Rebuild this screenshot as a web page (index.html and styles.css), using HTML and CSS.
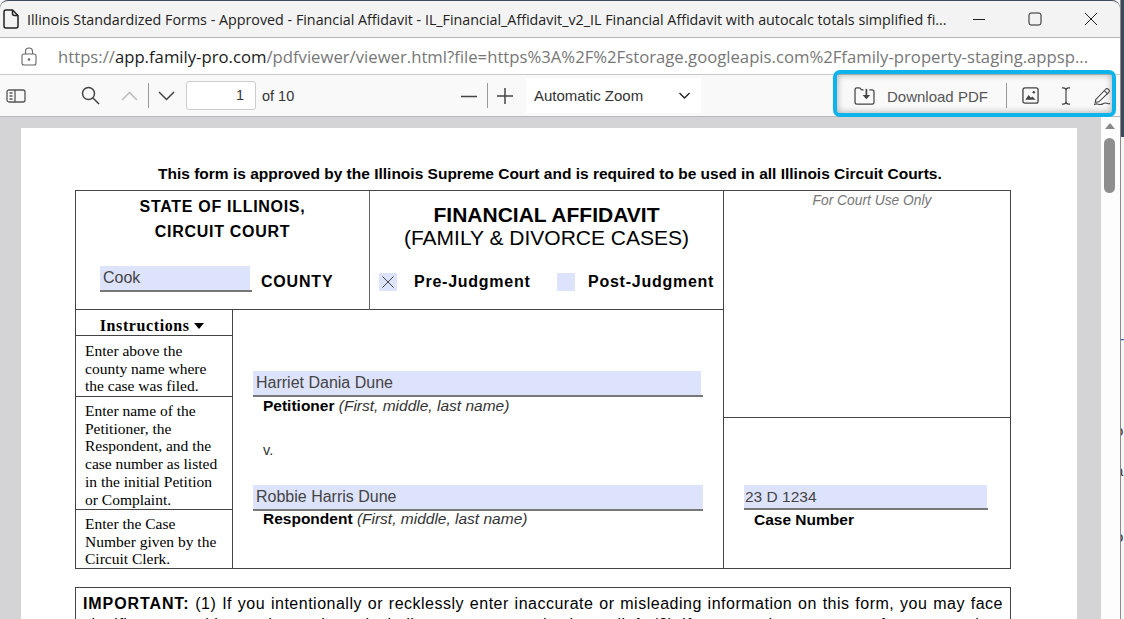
FILE: index.html
```html
<!DOCTYPE html>
<html lang="en">
<head>
    <meta charset="UTF-8">
    <title>Illinois Standardized Forms - Financial Affidavit</title>
    <link rel="stylesheet" href="styles.css">
</head>
<body>

<div class="desktop">
    <div class="window">

        <!-- title bar -->
        <div class="titlebar">
            <svg class="doc-icon" width="16" height="20" viewBox="0 0 16 20" fill="none" stroke="#222" stroke-width="1.5"><path d="M3 1h6.5L15 6.5V17a2 2 0 0 1-2 2H3a2 2 0 0 1-2-2V3a2 2 0 0 1 2-2z"/><path d="M9.5 1v3.5a2 2 0 0 0 2 2H15"/></svg>
            <span class="title-text">Illinois Standardized Forms - Approved - Financial Affidavit - IL_Financial_Affidavit_v2_IL Financial Affidavit with autocalc totals simplified fi...</span>
            <div class="win-buttons">
                <svg width="14" height="14" viewBox="0 0 14 14" stroke="#222" fill="none"><path d="M1 7.5h12"/></svg>
                <svg width="14" height="14" viewBox="0 0 14 14" stroke="#222" fill="none"><rect x="1" y="1" width="12" height="12" rx="2"/></svg>
                <svg width="14" height="14" viewBox="0 0 14 14" stroke="#222" fill="none"><path d="M1 1l12 12M13 1L1 13"/></svg>
            </div>
        </div>

        <!-- address bar -->
        <div class="addressbar">
            <svg class="lock-icon" width="16" height="19" viewBox="0 0 16 19" fill="none" stroke="#666" stroke-width="1.1"><rect x="1" y="7" width="14" height="11" rx="2"/><path d="M4.5 7V4.5a3.5 3.5 0 0 1 7 0V7"/><circle cx="8" cy="12.5" r="0.8" fill="#666"/></svg>
            <span class="url">https://<span class="url-host">app.family-pro.com</span>/pdfviewer/viewer.html?file=https%3A%2F%2Fstorage.googleapis.com%2Ffamily-property-staging.appsp...</span>
        </div>

        <!-- pdf toolbar -->
        <div class="toolbar">
            <svg class="tb-sidebar" width="20" height="14" viewBox="0 0 20 14" fill="none" stroke="#555" stroke-width="1.3"><rect x="1" y="1" width="18" height="12" rx="2"/><path d="M9 1v12M3.5 4h3M3.5 7h3M3.5 10h3"/></svg>
            <svg class="tb-search" width="19" height="19" viewBox="0 0 19 19" fill="none" stroke="#444" stroke-width="1.5"><circle cx="7.5" cy="7.5" r="6"/><path d="M12 12l6 6"/></svg>
            <svg class="tb-up" width="17" height="10" viewBox="0 0 17 10" fill="none" stroke="#bbb" stroke-width="1.5"><path d="M1 9l7.5-7.5L16 9"/></svg>
            <span class="tb-sep tb-sep-page"></span>
            <svg class="tb-down" width="17" height="10" viewBox="0 0 17 10" fill="none" stroke="#444" stroke-width="1.5"><path d="M1 1l7.5 7.5L16 1"/></svg>
            <div class="page-input">1</div>
            <span class="page-count">of 10</span>

            <svg class="tb-minus" width="16" height="16" viewBox="0 0 16 16" stroke="#444" stroke-width="1.5"><path d="M0 8.5h16"/></svg>
            <span class="tb-sep tb-sep-zoom"></span>
            <svg class="tb-plus" width="16" height="16" viewBox="0 0 16 16" stroke="#444" stroke-width="1.5"><path d="M0 8h16M8 0v16"/></svg>
            <div class="zoom-select">
                <span>Automatic Zoom</span>
                <svg width="11" height="7" viewBox="0 0 11 7" fill="none" stroke="#222" stroke-width="1.4"><path d="M0.5 1l5 5 5-5"/></svg>
            </div>

            <svg class="tb-download" width="21" height="18" viewBox="0 0 22 19" fill="none" stroke="#444" stroke-width="1.3"><path d="M6 1H3a2 2 0 0 0-2 2v13a2 2 0 0 0 2 2h16a2 2 0 0 0 2-2V5a2 2 0 0 0-2-2h-3"/><path d="M6 1l2 2h2"/><path d="M13 2v9" stroke-width="1.8"/><path d="M9 8.500h8l-4 4.500z" fill="#444" stroke="none"/></svg>
            <span class="download-label">Download PDF</span>
            <span class="tb-sep tb-sep-tools"></span>
            <svg class="tb-image" width="17" height="17" viewBox="0 0 18 18" fill="none" stroke="#444" stroke-width="1.4"><rect x="1" y="1" width="16" height="16" rx="2"/><path d="M3.5 13.5l3.5-5 2.5 3 1.5-1.500 3.500 3.500z" fill="#444" stroke="none"/><circle cx="12.500" cy="5.500" r="1.300" fill="#444" stroke="none"/></svg>
            <svg class="tb-cursor" width="10" height="20" viewBox="0 0 11 20" fill="none" stroke="#444" stroke-width="1.300"><path d="M1 1h1.500a3 3 0 0 1 3 3v12a3 3 0 0 1-3 3H1M10 1H8.500a3 3 0 0 0-3 3M10 19H8.500a3 3 0 0 1-3-3"/></svg>
            <svg class="tb-pen" width="18" height="20" viewBox="0 0 20 20" fill="none" stroke="#444" stroke-width="1.200"><path d="M3 14L14 2.500a2 2 0 0 1 3 0l.5.500a2 2 0 0 1 0 3L6.500 16.500 2.500 17z"/><path d="M12.500 4l4 4"/><path d="M1 19.300c4-1.500 5 .5 8 0s3-2 5-1.500 3 1.200 5 .5"/></svg>
        </div>

        <div class="viewer">
            <div class="viewer-main">
                <div class="page">
                    <p class="approved">This form is approved by the Illinois Supreme Court and is required to be used in all Illinois Circuit Courts.</p>

                    <div class="form-table">
                        <div class="cell-state">
                            <div class="state-title">STATE OF ILLINOIS,<br>CIRCUIT COURT</div>
                            <div class="county-row">
                                <div class="field-line county-line"><div class="field">Cook</div></div>
                                <span class="county-label">COUNTY</span>
                            </div>
                        </div>

                        <div class="cell-title">
                            <div class="form-name">FINANCIAL AFFIDAVIT</div>
                            <div class="form-sub">(FAMILY &amp; DIVORCE CASES)</div>
                            <div class="judgment-row">
                                <span class="check">
                                    <svg width="12" height="12" viewBox="0 0 12 12" stroke="#444" stroke-width="1"><path d="M0.500 0.500l11 11M11.500 0.500l-11 11"/></svg>
                                </span>
                                <span class="judgment pre">Pre-Judgment</span>
                                <span class="check"></span>
                                <span class="judgment post">Post-Judgment</span>
                            </div>
                        </div>

                        <div class="cell-court">
                            <div class="court-use">
                                <span class="court-note">For Court Use Only</span>
                            </div>
                            <div class="case-box">
                                <div class="field-line case-line"><div class="field field-case">23 D 1234</div></div>
                                <div class="case-label">Case Number</div>
                            </div>
                        </div>

                        <div class="cell-lower">
                            <div class="instructions">
                                <div class="ins-head">Instructions <span class="ins-arrow"></span></div>
                                <div class="ins-box ins-county">Enter above the county name where the case was filed.</div>
                                <div class="ins-box ins-names">Enter name of the Petitioner, the Respondent, and the case number as listed in the initial Petition or Complaint.</div>
                                <div class="ins-box ins-case">Enter the Case Number given by the Circuit Clerk.</div>
                            </div>
                            <div class="parties">
                                <div class="field-line party-line"><div class="field">Harriet Dania Dune</div></div>
                                <div class="party-label"><b>Petitioner</b> <i>(First, middle, last name)</i></div>
                                <div class="versus">v.</div>
                                <div class="field-line party-line respondent-line"><div class="field">Robbie Harris Dune</div></div>
                                <div class="party-label respondent-label"><b>Respondent</b> <i>(First, middle, last name)</i></div>
                            </div>
                        </div>
                    </div>

                    <div class="important">
                        <b>IMPORTANT:</b> (1) If you intentionally or recklessly enter inaccurate or misleading information on this form, you may face significant penalties and sanctions, including contempt and other relief. (2) If you need more space for any section, complete an additional page and attach it to this form before you file it.
                    </div>
                </div>
            </div>
            <div class="scrollbar">
                <span class="scroll-up"></span>
                <span class="scroll-thumb"></span>
            </div>
        </div>

        <!-- highlight drawn over the toolbar tools -->
        <div class="callout"></div>
    </div>

    <div class="behind">
        <span class="behind-dark"></span>
        <span class="frag frag-1">T</span>
        <span class="frag frag-2">i</span>
        <span class="frag frag-3">o</span>
        <span class="frag frag-4">a</span>
        <span class="frag frag-5">o</span>
    </div>
</div>

</body>
</html>
```

FILE: styles.css
```css
* {
    box-sizing: border-box;
}
html, body {
    margin: 0;
    padding: 0;
    height: 100%;
}
body {
    font-family: 'Liberation Sans', Arial, sans-serif;
    color: #000;
    overflow: hidden;
}
.desktop {
    display: flex;
    width: 1124px;
    height: 619px;
    overflow: hidden;
    background-color: #f7f7f7;
}
.window {
    position: relative;
    width: 1121px;
    height: 619px;
    flex-shrink: 0;
    display: flex;
    flex-direction: column;
    border-right: 1px solid #8b8b8b;
}
.behind {
    position: relative;
    flex: 1;
    overflow: hidden;
}
.behind-dark {
    position: absolute;
    top: 0;
    left: 0;
    right: 0;
    height: 137px;
    background-color: #3c4a5c;
}
.frag {
    position: absolute;
    left: -6px;
    font-size: 15px;
    color: #3a5a9a;
}
.frag-1 { top: 335px; }
.frag-2 { top: 378px; }
.frag-3 { top: 422px; color: #4a3a20; }
.frag-4 { top: 462px; color: #4a3a20; }
.frag-5 { top: 528px; color: #333; }

/* title bar */
.titlebar {
    height: 38px;
    flex-shrink: 0;
    display: flex;
    align-items: center;
    background-color: #f3f3f3;
    border-top: 1px solid #3c4a5c;
    border-bottom: 1px solid #b4b4b4;
    border-radius: 8px 8px 0 0;
    padding-left: 3px;
}
.doc-icon {
    flex-shrink: 0;
}
.title-text {
    margin-left: 8px;
    width: 925px;
    font-family: 'Open Sans', sans-serif;
    font-size: 14.3px;
    color: #222;
    white-space: nowrap;
    overflow: hidden;
}
.win-buttons {
    display: flex;
    margin-left: 20px;
    gap: 42px;
}

/* address bar */
.addressbar {
    height: 37px;
    flex-shrink: 0;
    display: flex;
    align-items: center;
    background-color: #fff;
    border-bottom: 1px solid #c9c9c9;
    padding-left: 21px;
}
.url {
    margin-left: 21px;
    font-family: 'Open Sans', sans-serif;
    font-size: 16.7px;
    color: #777;
    white-space: nowrap;
}
.url-host {
    color: #1a1a1a;
}

/* pdf toolbar */
.toolbar {
    height: 42px;
    flex-shrink: 0;
    display: flex;
    align-items: center;
    background-color: #f9f9fa;
    border-bottom: 1px solid #b8b8b8;
    font-size: 14.5px;
    color: #333;
}
.tb-sidebar { margin-left: 6px; }
.tb-search { margin-left: 55px; }
.tb-up { margin-left: 21px; }
.tb-sep {
    width: 1px;
    height: 25px;
    background-color: #999;
}
.tb-sep-page { margin-left: 10px; }
.tb-down { margin-left: 9px; }
.page-input {
    margin-left: 11px;
    width: 70px;
    height: 29px;
    padding-right: 11px;
    line-height: 27px;
    text-align: right;
    background-color: #fff;
    border: 1px solid #ccc;
    border-radius: 3px;
}
.page-count {
    margin-left: 6px;
    width: 33px;
    white-space: nowrap;
}
.tb-minus { margin-left: 166px; }
.tb-sep-zoom { margin-left: 10px; }
.tb-plus { margin-left: 9px; }
.zoom-select {
    margin-left: 13px;
    width: 175px;
    height: 35px;
    padding: 0 11px 0 8px;
    display: flex;
    align-items: center;
    justify-content: space-between;
    background-color: #fff;
    font-size: 15px;
}
.tb-download { margin-left: 153px; }
.download-label {
    margin-left: 12px;
    padding-top: 2px;
    width: 100px;
    font-size: 15px;
    color: #555;
    white-space: nowrap;
}
.tb-sep-tools { margin-left: 19px; }
.tb-image { margin-left: 15px; }
.tb-cursor { margin-left: 22px; }
.tb-pen { margin-left: 22px; }
.callout {
    position: absolute;
    left: 833px;
    top: 70px;
    width: 283px;
    height: 47px;
    border: 4px solid #0db4ec;
    border-radius: 7px;
    box-shadow: inset 0 0 7px rgba(0, 0, 0, 0.35);
}

/* viewer */
.viewer {
    flex: 1;
    display: flex;
    min-height: 0;
    background-color: #d4d4d7;
}
.viewer-main {
    flex: 1;
    padding: 11px 24px 0 21px;
    overflow: hidden;
}
.page {
    width: 1056px;
    height: 600px;
    background-color: #fff;
    padding: 38px 0 0 54px;
}
.scrollbar {
    position: relative;
    width: 19px;
    height: 100%;
    background-color: #fdfdfd;
}
.scroll-up {
    position: absolute;
    top: 6px;
    left: 4px;
    border-left: 5.5px solid transparent;
    border-right: 5.5px solid transparent;
    border-bottom: 6px solid #888;
}
.scroll-thumb {
    position: absolute;
    top: 21px;
    left: 3px;
    width: 11px;
    height: 55px;
    background-color: #8e8e8e;
    border-radius: 6px;
}

/* form */
.approved {
    margin: 0 0 0 83px;
    height: 24px;
    line-height: 16px;
    font-size: 15.5px;
    font-weight: bold;
    white-space: nowrap;
}
.form-table {
    width: 936px;
    height: 379px;
    display: grid;
    grid-template-columns: 294px 354px 1fr;
    grid-template-rows: 119px 1fr;
    border: 1px solid #444;
}
.cell-state {
    padding-top: 3px;
    border-right: 1px solid #666;
    border-bottom: 1px solid #444;
}
.state-title {
    text-align: center;
    font-size: 16px;
    font-weight: bold;
    line-height: 25px;
    letter-spacing: 0.7px;
}
.county-row {
    display: flex;
    align-items: flex-end;
    margin-top: 22px;
    padding-left: 24px;
}
.field-line {
    padding-right: 2px;
    border-bottom: 2px solid #777;
}
.field {
    height: 23px;
    padding-left: 3px;
    background-color: #dde3fb;
    font-size: 16px;
    line-height: 23px;
    color: #444;
    white-space: nowrap;
}
.county-line {
    width: 152px;
}
.county-line .field {
    height: 24px;
    line-height: 24px;
}
.county-label {
    margin-left: 9px;
    font-size: 16px;
    font-weight: bold;
    line-height: 22px;
    letter-spacing: 0.8px;
    transform: translateY(1px);
}
.cell-title {
    padding-top: 12px;
    text-align: center;
    border-right: 1px solid #444;
    border-bottom: 1px solid #444;
}
.form-name {
    font-size: 21px;
    font-weight: bold;
    line-height: 23px;
}
.form-sub {
    font-size: 21px;
    line-height: 23px;
}
.judgment-row {
    display: flex;
    align-items: center;
    margin-top: 24px;
    padding-left: 9px;
    text-align: left;
}
.check {
    width: 18px;
    height: 18px;
    display: flex;
    align-items: center;
    justify-content: center;
    background-color: #dde3fb;
}
.judgment {
    font-size: 16px;
    font-weight: bold;
    letter-spacing: 0.75px;
    white-space: nowrap;
}
.pre {
    margin-left: 17px;
    width: 143px;
}
.post {
    margin-left: 13px;
}
.cell-court {
    grid-column: 3;
    grid-row: 1 / span 2;
    display: flex;
    flex-direction: column;
}
.court-use {
    height: 227px;
    padding-left: 10px;
    text-align: center;
    border-bottom: 1px solid #444;
}
.court-note {
    font-size: 13.8px;
    font-style: italic;
    line-height: 16px;
    color: #777;
}
.case-box {
    padding: 67px 0 0 20px;
}
.case-line {
    width: 244px;
    padding-right: 1px;
}
.field-case {
    height: 23px;
    padding-left: 1px;
    font-size: 15.5px;
    line-height: 23px;
}
.case-label {
    margin: 0 0 0 10px;
    font-size: 15.5px;
    font-weight: bold;
    line-height: 19px;
}
.cell-lower {
    grid-column: 1 / span 2;
    grid-row: 2;
    display: grid;
    grid-template-columns: 157px 1fr;
    border-right: 1px solid #444;
}
.instructions {
    display: flex;
    flex-direction: column;
    font-family: 'Liberation Serif', 'Times New Roman', serif;
    border-right: 1px solid #444;
}
.ins-head {
    height: 26px;
    padding-right: 4px;
    line-height: 32px;
    text-align: center;
    font-size: 16px;
    font-weight: bold;
    letter-spacing: 0.6px;
    border-bottom: 1px solid #444;
}
.ins-arrow {
    display: inline-block;
    margin-bottom: 2px;
    border-left: 5.5px solid transparent;
    border-right: 5.5px solid transparent;
    border-top: 6px solid #000;
}
.ins-box {
    padding: 6px 9px 0;
    font-size: 15.5px;
    line-height: 17.7px;
    border-bottom: 1px solid #444;
}
.ins-county { height: 61px; }
.ins-names { height: 113px; padding-top: 5px; }
.ins-case { flex: 1; padding-top: 5px; border-bottom: 0; }
.parties {
    padding: 61px 0 0 20px;
}
.party-line {
    width: 450px;
}
.party-label {
    height: 20px;
    margin-top: -1px;
    padding-left: 10px;
    font-size: 15.5px;
    line-height: 19px;
}
.party-label i {
    color: #333;
}
.respondent-label {
    margin-top: -2px;
}
.versus {
    margin-top: 26px;
    padding-left: 10px;
    font-size: 14.5px;
    line-height: 17px;
    color: #333;
}
.respondent-line {
    margin-top: 26px;
    padding-right: 0;
}
.party-line .field {
    height: 24px;
}
.important {
    width: 936px;
    margin-top: 18px;
    padding: 5px 7px 0;
    border: 1px solid #444;
    font-size: 16px;
    line-height: 21px;
    letter-spacing: 0.5px;
    text-align: justify;
}
.important b {
    letter-spacing: 0.9px;
}
```
